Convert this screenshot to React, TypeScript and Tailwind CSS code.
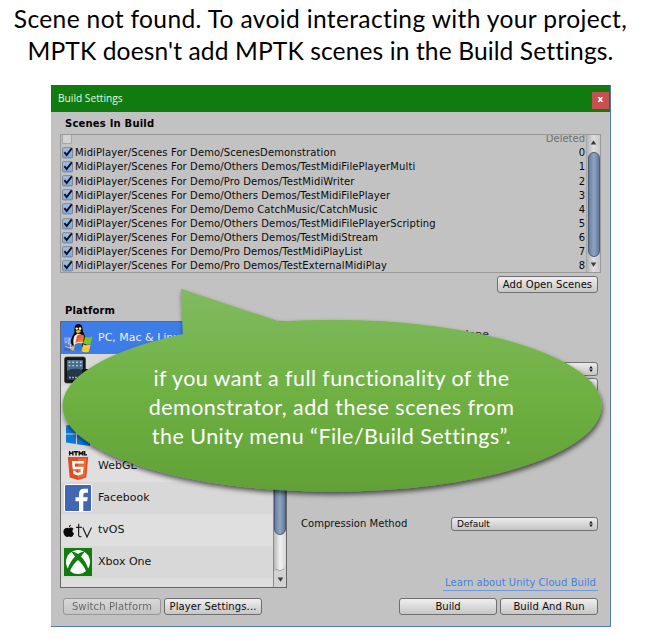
import React from "react";

const scenes = [
  "MidiPlayer/Scenes For Demo/ScenesDemonstration",
  "MidiPlayer/Scenes For Demo/Others Demos/TestMidiFilePlayerMulti",
  "MidiPlayer/Scenes For Demo/Pro Demos/TestMidiWriter",
  "MidiPlayer/Scenes For Demo/Others Demos/TestMidiFilePlayer",
  "MidiPlayer/Scenes For Demo/Demo CatchMusic/CatchMusic",
  "MidiPlayer/Scenes For Demo/Others Demos/TestMidiFilePlayerScripting",
  "MidiPlayer/Scenes For Demo/Others Demos/TestMidiStream",
  "MidiPlayer/Scenes For Demo/Pro Demos/TestMidiPlayList",
  "MidiPlayer/Scenes For Demo/Pro Demos/TestExternalMidiPlay",
];

function Check() {
  return (
    <svg className="-mt-px h-[12px] w-[12px] shrink-0" viewBox="0 0 12 12">
      <defs>
        <linearGradient id="cb" x1="0" y1="0" x2="0" y2="1">
          <stop offset="0" stopColor="#a3c0e4" />
          <stop offset="1" stopColor="#7fa6da" />
        </linearGradient>
      </defs>
      <rect x="0.500" y="0.700" width="10" height="10.200" rx="1" fill="url(#cb)" stroke="#76818f" strokeWidth="0.900" />
      <path d="M2.400 5.100 L4.700 8 L9.800 1.300" fill="none" stroke="#0b0f1c" strokeWidth="1.900" />
    </svg>
  );
}

function Arrow({ up = false }: { up?: boolean }) {
  return (
    <svg className="h-[5px] w-[7px] shrink-0" viewBox="0 0 7 5">
      <path d={up ? "M3.5 0.2 L6.3 4.6 H0.7 Z" : "M3.5 4.8 L6.3 0.4 H0.7 Z"} fill="#3d3d3d" />
    </svg>
  );
}

function Button({ children, className = "" }: { children: React.ReactNode; className?: string }) {
  return (
    <div
      className={
        "flex h-[17px] items-center justify-center whitespace-nowrap rounded-[3px] border border-[#6e6e6e] bg-gradient-to-b from-[#efefef] to-[#c6c6c6] text-[10px] leading-none text-[#0a0a0a] " +
        className
      }
    >
      {children}
    </div>
  );
}

function Select({ children }: { children?: React.ReactNode }) {
  return (
    <div className="ml-auto flex h-[14px] w-[147px] items-center justify-between rounded-[3px] border border-[#727272] bg-gradient-to-b from-[#ececec] to-[#c4c4c4] pl-[5px] pr-[4px] text-[9px] leading-none text-[#0a0a0a]">
      <span>{children}</span>
      <svg className="h-[6px] w-[4px]" viewBox="0 0 4 6">
        <path d="M2 0 L3.8 2.4 H0.2 Z M2 6 L3.8 3.6 H0.2 Z" fill="#111" />
      </svg>
    </div>
  );
}

function StandaloneIcon() {
  return (
    <svg className="h-[30px] w-[30px]" viewBox="0 0 30 30">
      <defs>
        <linearGradient id="fin" x1="0" y1="0" x2="0" y2="1">
          <stop offset="0" stopColor="#86a5e6" />
          <stop offset="1" stopColor="#3e5fb0" />
        </linearGradient>
        <linearGradient id="wr" x1="0" y1="0" x2="1" y2="1">
          <stop offset="0" stopColor="#e2401c" />
          <stop offset="1" stopColor="#f59a58" />
        </linearGradient>
      </defs>
      <rect x="1" y="14.500" width="11" height="13" fill="url(#fin)" />
      <path d="M6.500 15 L5.500 21 H7.500 V26 M3 18 V20 M2.500 23.500 Q6 26 10 24" fill="none" stroke="#dbe4fa" strokeWidth="0.8" />
      <path d="M11.500 6 Q11.500 1 15.500 1 Q19.500 1 19.500 6 Q19.500 9 22 13 Q25 18 23 22 L16 25 L9 22 Q6.500 18 9.500 13 Q12 10 11.500 6Z" fill="#080808" />
      <path d="M11.500 13 Q15.500 8.500 19.500 13 L20.500 20 L11 23 Q9.500 17 11.500 13Z" fill="#f2f2f2" />
      <circle cx="13.800" cy="5.600" r="1.200" fill="#fff" />
      <circle cx="17" cy="5.600" r="1.300" fill="#fff" />
      <path d="M12.500 8 Q15.500 6 18.300 8 Q16 11 14 10.300Z" fill="#f4b31d" />
      <path d="M9.500 24 L12.500 21 L15 26 L11 28 L7.500 27Z" fill="#f3c024" />
      <path d="M14 12.800 Q17.500 10.300 21.300 12.800 L19.700 20 Q16 18 12.300 20.300Z" fill="url(#wr)" />
      <path d="M22 13.400 Q25 15.600 29.400 13.200 L27.800 20.500 Q24 22.300 20.400 20.400Z" fill="#78c522" />
      <path d="M12 21.300 Q16 19.100 19.500 21 L17.900 28 Q14.500 26.300 10.600 28.300Z" fill="#3679dd" />
      <path d="M20.200 21.300 Q23.500 23.200 27.600 21.500 L26 28.500 Q22 30.300 18.600 28.300Z" fill="#fbc926" />
    </svg>
  );
}

function TabletIcon() {
  return (
    <svg className="h-[28px] w-[28px]" viewBox="0 0 28 28">
      <rect x="0.500" y="1" width="21" height="26" rx="2" fill="#161616" stroke="#444" strokeWidth="0.700" />
      <rect x="3" y="4" width="16" height="19.500" fill="#4a6f8d" />
      <path d="M3 15 Q9 11 19 14 V23.500 H3Z" fill="#233748" />
      <path d="M4.500 6.200 H18 M4.500 9.600 H18" stroke="#c3ced6" strokeWidth="1.400" strokeDasharray="1.800 2" />
      <path d="M5 21.500 H17" stroke="#9eacb8" strokeWidth="1.700" strokeDasharray="2 1" />
      <rect x="18" y="13" width="9" height="14" rx="1.500" fill="#111" />
    </svg>
  );
}

function WindowsIcon() {
  return (
    <svg className="h-[24px] w-[24px]" viewBox="0 0 24 24">
      <path d="M0 3.500 L10 2 V11.500 H0Z M11 1.900 L24 0 V11.500 H11Z M0 12.500 H10 V22 L0 20.500Z M11 12.500 H24 V24 L11 22.200Z" fill="#0b79d8" />
    </svg>
  );
}

function Html5Icon() {
  return (
    <svg className="h-[30px] w-[24px]" viewBox="0 0 24 30">
      <path d="M3.600 0 V4.500 M6.900 0 V4.500 M3.600 2.200 H6.900 M8 0.700 H12 M10 0.700 V4.500 M13.200 4.500 V0.800 L15 3 L16.800 0.800 V4.500 M18.600 0 V3.900 H21" fill="none" stroke="#0c0c0c" strokeWidth="1.400" />
      <path d="M1.800 6 H22.200 L20.300 26.500 L12 29 L3.700 26.500Z" fill="#e14c25" />
      <path d="M12 7.600 H20.500 L18.900 25.300 L12 27.300Z" fill="#ee6a35" />
      <path d="M17.800 11.300 H7.300 L7.900 17 H16.200 L15.600 22 L12 23.200 L8.500 22 L8.200 19.700" fill="none" stroke="#fff" strokeWidth="2.500" />
    </svg>
  );
}

function FacebookIcon() {
  return (
    <svg className="h-[28px] w-[28px]" viewBox="0 0 28 28">
      <rect x="0.500" y="0.500" width="27" height="27" rx="1.500" fill="#4267b2" stroke="#fafafa" />
      <path d="M15 27 V17.300 H11.500 V13.300 H15 V10 Q15 4.800 20.300 4.800 H24 V8.700 H21.500 Q19.300 8.700 19.300 10.800 V13.300 H23.800 L23.100 17.300 H19.300 V27Z" fill="#fff" />
    </svg>
  );
}

function AppleTvIcon() {
  return (
    <svg className="mt-[2px] h-[16px] w-[29px]" viewBox="0 0 29 16">
      <path d="M8 1.500 Q8 3.800 5.800 4.400 Q5.700 2.100 8 1.500Z M5.800 5.200 Q8.200 3.800 10.600 5.800 Q8 8 11 10.500 Q9.700 14 7.800 14 Q6 13.100 4.300 14 Q2.300 14.400 0.800 10.900 Q-0.500 7 2.200 5.300 Q4 4.400 5.800 5.200Z" fill="#080808" />
      <path d="M15.600 0.800 V11.800 Q15.600 14.300 18.500 13.600 M13 4.400 H18.800 M19.800 4.400 L24 14 L28.500 4.400" fill="none" stroke="#222" strokeWidth="1.200" />
    </svg>
  );
}

function XboxIcon() {
  return (
    <svg className="h-[28px] w-[28px]" viewBox="0 0 28 28">
      <rect width="28" height="28" fill="#107c10" />
      <circle cx="14" cy="14" r="12" fill="#fff" />
      <path d="M7 3.500 Q10 3 14 6 Q18 3 21 3.500 Q19 5.500 17 8.500 Q22 13.500 24.500 21.500 L22.300 23.700 Q19.500 16.500 14 12 Q8.500 16.500 5.700 23.700 L3.500 21.500 Q6 13.500 11 8.500 Q9 5.500 7 3.500Z" fill="#107c10" />
    </svg>
  );
}

const platforms: { id: string; name?: string; icon?: React.ReactNode }[] = [
  { id: "standalone", name: "PC, Mac & Linux", icon: <StandaloneIcon /> },
  { id: "ios", icon: <TabletIcon /> },
  { id: "android" },
  { id: "uwp", icon: <WindowsIcon /> },
  { id: "webgl", name: "WebGL", icon: <Html5Icon /> },
  { id: "facebook", name: "Facebook", icon: <FacebookIcon /> },
  { id: "tvos", name: "tvOS", icon: <AppleTvIcon /> },
  { id: "xbox", name: "Xbox One", icon: <XboxIcon /> },
];

function ScenesInBuild() {
  return (
    <div className="ml-[9px] flex h-[139px] w-[541px] overflow-hidden border border-[#999] text-[10px] leading-none text-[#0a0a0a]">
      <div className="-mt-[3px] min-w-0 flex-1 pl-px pr-[1px]">
        <div className="flex h-[14.170px] items-center justify-between">
          <span className="h-[10px] w-[10px] rounded-[1px] border border-[#a6a6a6] bg-[#d3d3d3]" />
          <span className="text-[#707070]">Deleted</span>
        </div>
        {scenes.map((scene, i) => (
          <div key={scene} className="flex h-[14.170px] items-center whitespace-nowrap">
            <Check />
            <span className="ml-[1px] flex-1 tracking-[0.110px]">{scene}</span>
            <span>{i}</span>
          </div>
        ))}
      </div>
      <div className="flex w-[14px] shrink-0 flex-col items-center justify-between border-l border-[#a5a5a5] bg-gradient-to-r from-[#b5b5b5] via-[#dedede] to-[#c8c8c8] pb-[5px] pt-[5px]">
        <Arrow up />
        <div className="mt-[2px] h-[105px] w-[12px] rounded-[6px] border border-[#4c5c77] bg-gradient-to-r from-[#687f9f] via-[#8ea5c4] to-[#637998]" />
        <Arrow />
      </div>
    </div>
  );
}

function PlatformList() {
  return (
    <div className="ml-[9px] flex h-[267px] w-[227px] overflow-hidden border border-[#666] bg-[#dedede]">
      <div className="w-[212px] shrink-0">
        {platforms.map((p, i) => (
          <div
            key={p.id}
            className={
              "flex h-[32px] items-center overflow-hidden whitespace-nowrap text-[11px] leading-none " +
              (i === 0 ? "bg-[#3e7de7] text-[#e8efff]" : i % 2 ? "bg-[#d8d8d8] text-[#141414]" : "bg-[#dfdfdf] text-[#141414]")
            }
          >
            <span className="flex w-[33px] shrink-0 items-center justify-center">{p.icon}</span>
            {p.name && <span className="-mt-[2px] ml-[4px]">{p.name}</span>}
          </div>
        ))}
      </div>
      <div className="flex flex-1 flex-col items-center border-l border-[#8b8b8b] bg-gradient-to-r from-[#b7b7b7] via-[#f1f1f1] to-[#d5d5d5]">
        <div className="h-[213px] w-[12px] rounded-[6px] border border-[#4c5c77] bg-gradient-to-r from-[#687f9f] via-[#8ea5c4] to-[#637998]" />
        <div className="h-[36px] w-full rounded-b-[6px] border-b border-[#a2a2a2]" />
        <div className="flex w-full flex-1 items-center justify-center bg-[#d2d2d2]">
          <Arrow />
        </div>
      </div>
    </div>
  );
}

function PlatformSettings() {
  return (
    <div className="ml-[14px] mr-[12px] flex-1 text-[10px] leading-none text-[#111]">
      <div className="flex h-[20px] items-end justify-end pb-px pr-[109px] text-[11px] text-[#222]">Standalone</div>
      <div className="mt-[21px] flex h-[14px]">
        <Select />
      </div>
      <div className="mt-[2px] flex h-[14px]">
        <Select />
      </div>
      <div className="mt-[125px] flex h-[14px] items-center">
        <span className="whitespace-nowrap tracking-[0.040px]">Compression Method</span>
        <Select>Default</Select>
      </div>
      <div className="mt-[45px] flex justify-end">
        <span className="flex h-[15px] items-center whitespace-nowrap border-b border-[#6c98e6] px-[2px] tracking-[0.050px] text-[#4580e5]">
          Learn about Unity Cloud Build
        </span>
      </div>
    </div>
  );
}

function Callout() {
  return (
    <div className="absolute left-[50px] top-[280px] h-[230px] w-[563px]">
      <svg className="absolute inset-0 h-full w-full overflow-visible" viewBox="50 280 563 230">
        <defs>
          <linearGradient id="green" x1="0" y1="289" x2="0" y2="492" gradientUnits="userSpaceOnUse">
            <stop offset="0" stopColor="#81ba60" />
            <stop offset="0.500" stopColor="#6fb143" />
            <stop offset="1" stopColor="#61a136" />
          </linearGradient>
          <filter id="shadow" x="-10%" y="-10%" width="120%" height="130%">
            <feDropShadow dx="1" dy="3" stdDeviation="2.800" floodColor="#000" floodOpacity="0.620" />
          </filter>
        </defs>
        <g filter="url(#shadow)" fill="url(#green)">
          <ellipse cx="332" cy="405.700" rx="269.500" ry="86" />
          <path d="M181 288.800 L279 321.300 L279 360 H184 Z" />
        </g>
      </svg>
      <div className="relative flex h-full flex-col items-center pt-[84px] font-['Lato',sans-serif] text-[21.500px] leading-[29px] text-white">
        <div className="whitespace-nowrap tracking-[0.400px]">if you want a full functionality of the</div>
        <div className="whitespace-nowrap tracking-[0.480px]">demonstrator, add these scenes from</div>
        <div className="whitespace-nowrap tracking-[0.450px]">the Unity menu “File/Build Settings”.</div>
      </div>
    </div>
  );
}

export default function App() {
  return (
    <div className="relative h-[643px] w-[650px] overflow-hidden bg-white font-['DejaVu_Sans',Verdana,sans-serif]">
      <div className="flex h-[85px] flex-col items-center pr-[9px] pt-[3px] font-['Lato',sans-serif] text-[24.600px] leading-[32px] text-black">
        <div className="whitespace-nowrap tracking-[0.340px]">Scene not found. To avoid interacting with your project,</div>
        <div className="whitespace-nowrap tracking-[0.100px]">MPTK doesn't add MPTK scenes in the Build Settings.</div>
      </div>
      <div className="ml-[51px] flex h-[542px] w-[560px] flex-col border-b border-r border-[#5678b0] bg-[#c2c2c2]">
        <div className="flex h-[27px] items-center justify-between bg-[#107c10] pl-[7px] pr-[1px] text-white">
          <span className="font-['Open_Sans',sans-serif] text-[10.200px] leading-none text-[#e9f5e9]">Build Settings</span>
          <span className="mt-[3px] flex h-[17px] w-[17px] items-center justify-center bg-[#c75050] pb-px text-[9px] font-bold leading-none">x</span>
        </div>
        <div className="flex h-[22px] items-center pl-[14px] pt-px text-[10px] font-bold leading-none tracking-[0.200px] text-black">Scenes In Build</div>
        <ScenesInBuild />
        <div className="mr-[12px] mt-[3px] flex justify-end">
          <Button className="w-[101px] tracking-[0.080px]">Add Open Scenes</Button>
        </div>
        <div className="mt-[8px] flex h-[20px] items-center pl-[14px] text-[10px] font-bold leading-none tracking-[0.150px] text-black">Platform</div>
        <div className="flex h-[267px]">
          <PlatformList />
          <PlatformSettings />
        </div>
        <div className="mr-[12px] mt-[10px] flex gap-[3px] pl-[12px]">
          <Button className="w-[98px] tracking-[0.120px] opacity-50">Switch Platform</Button>
          <Button className="w-[98px] tracking-[0.120px]">Player Settings...</Button>
          <Button className="ml-auto w-[98px]">Build</Button>
          <Button className="w-[98px] tracking-[0.080px]">Build And Run</Button>
        </div>
      </div>
      <Callout />
    </div>
  );
}
